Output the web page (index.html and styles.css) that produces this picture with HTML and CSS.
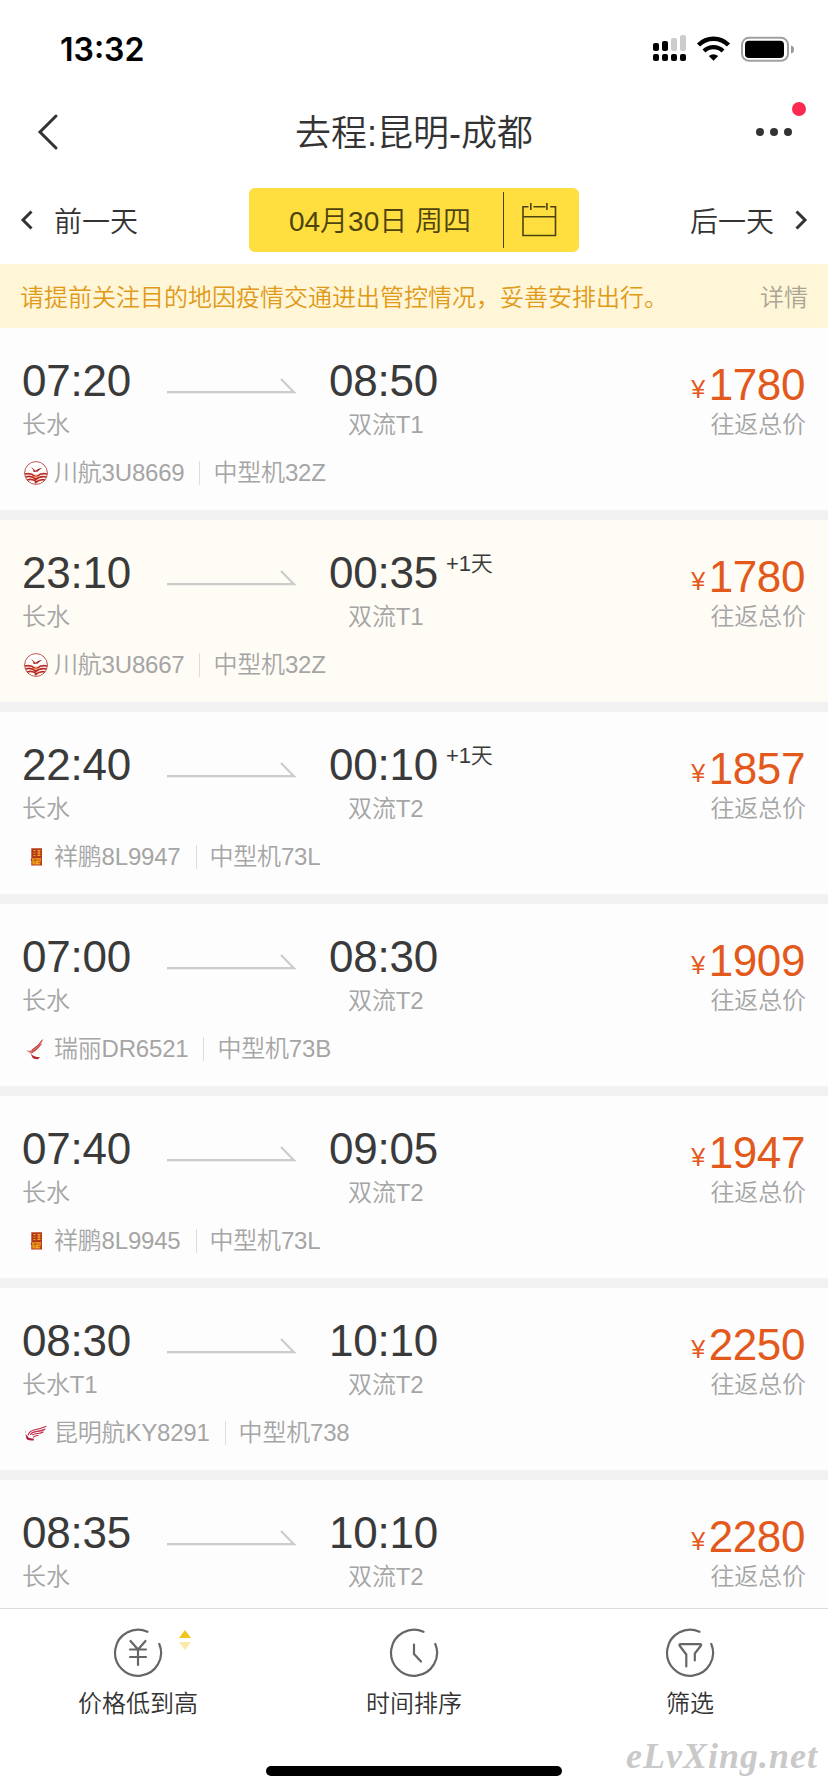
FILE: index.html
```
<!DOCTYPE html>
<html lang="zh-CN">
<head>
<meta charset="utf-8">
<title>去程:昆明-成都</title>
<link rel="stylesheet" href="styles.css">
</head>
<body>
<svg class="defs" width="0" height="0">
  <symbol id="arrow" viewBox="0 0 130 18"><path d="M1 15.2H128L115 2" fill="none" stroke="#ccc" stroke-width="2.2"/></symbol>
  <symbol id="sichuan" viewBox="0 0 24 24">
    <circle cx="12" cy="12" r="11.4" fill="#fff" stroke="#b8433c" stroke-width=".9"/>
    <path d="M5.5 5.5Q9 7 11.5 9.8Q14 7 18.6 6.7Q15.5 8 13.8 10.6L9.5 11Q10 8 5.5 5.5Z" fill="#a3201c"/>
    <g fill="none" stroke="#bb2a25" stroke-width="1.7">
      <path d="M.8 13Q7 11.5 11 15.3"/><path d="M1.6 16Q7 14 12 18.3"/><path d="M3 19Q8 17 13 21"/>
      <path d="M23.2 13Q17 11.5 13 15.3"/><path d="M22.4 16Q16 14.5 11 19"/><path d="M21 19Q16 17.5 11 22"/>
    </g>
    <path d="M10.5 15.5L12 13L13.5 15.5L12 17.5Z" fill="#e8863a"/>
  </symbol>
  <symbol id="lucky" viewBox="0 0 24 24">
    <path d="M7.3 3.3H18V20.5H7.3V16L6.4 14.8L7.3 13.7Z" fill="#b43a1d"/>
    <path d="M9.5 5.5H11.5M9.5 8H11.5M9.5 10.5H11.5M13.3 5.5H16.5M13.3 8H16.5M13.3 10.5H16.5M14.9 5V11" stroke="#f2a51e" stroke-width="1.2"/>
    <path d="M8 13.2H17L16 19.4H8.6Z" fill="#eda41b"/>
    <path d="M9 15.2H16M11 13.5V18.5M14 17.5H16" stroke="#c04a17" stroke-width=".8"/>
  </symbol>
  <symbol id="ruili" viewBox="0 0 24 24">
    <path d="M18.8 2.3Q17 11 7.2 16.8L2 13.3Q5 14.2 7.2 13.2Q14 9 18.8 2.3Z" fill="#d6706a"/>
    <path d="M18.6 2.6Q15 8.5 8 13M17.5 7Q14 12.5 8 15.5" fill="none" stroke="#c7322c" stroke-width=".9"/>
    <path d="M6.5 16Q8.5 20 16.2 20.3L13.8 22.2Q9.5 22.5 8.2 20.2Z" fill="#b52a27"/>
  </symbol>
  <symbol id="kunming" viewBox="0 0 24 24">
    <path d="M1 8.6Q.6 13 3 14.6L4.5 16.6Q6.5 17.7 9.5 17.5L10 19.2Q3.5 20 2.3 17.2Q1.6 14 1 8.6Z" fill="#b01f3b"/>
    <path d="M4.2 14.4Q4.6 10.5 10 9Q17 7.5 22.4 5.2M6.4 14Q7.2 11.5 12 10.7Q17 10 21.3 8.1M8.3 14.2Q9.5 12.8 14 12.5Q17.5 12.2 19.5 10.8M9.4 16.6Q9.8 14.8 14.5 14.5" fill="none" stroke="#bd2d49" stroke-width="1.2"/>
  </symbol>
  <symbol id="ring" viewBox="0 0 52 52"><path d="M35.5 4.8A23 23 0 1 0 47.3 17" fill="none" stroke="#666" stroke-width="2.2" stroke-linecap="round"/></symbol>
</svg>
<div class="screen">
  <header class="status">
    <span class="clock">13:32</span>
    <svg class="status-icons" width="144" height="30" viewBox="0 0 144 30">
      <g><rect x="1" y="9" width="6" height="8" rx="2"/><rect x="10" y="7" width="6" height="10" rx="2"/><rect x="19" y="4" width="6" height="13" rx="2" fill="#ccc"/><rect x="28" y="1" width="6" height="16" rx="2" fill="#ccc"/>
      <rect x="1" y="20" width="6" height="7" rx="2"/><rect x="10" y="20" width="6" height="7" rx="2"/><rect x="19" y="20" width="6" height="7" rx="2"/><rect x="28" y="20" width="6" height="7" rx="2"/></g>
      <path d="M46.5 11A21 21 0 0 1 76.5 11" fill="none" stroke="#000" stroke-width="4.4"/>
      <path d="M52 17A13.5 13.5 0 0 1 71 17" fill="none" stroke="#000" stroke-width="4.2"/>
      <path d="M56.8 22Q61.5 18.4 66.2 22L61.5 26.8Z"/>
      <rect x="90" y="3.8" width="46" height="23" rx="7" fill="#fff" stroke="#a0a0a0" stroke-width="2"/>
      <rect x="93" y="6.8" width="39" height="17.2" rx="4"/>
      <path d="M139 11.5Q142 12 142 15.4Q142 18.8 139 19.4Z" fill="#999"/>
    </svg>
  </header>
  <nav class="nav">
    <svg class="back" width="24" height="38" viewBox="0 0 24 38"><path d="M20 3L4 19L20 35" fill="none" stroke="#333" stroke-width="3" stroke-linecap="round"/></svg>
    <h1 class="title">去程:昆明-成都</h1>
    <div class="more"><i class="dot"></i><i class="dot"></i><i class="dot"></i><i class="badge"></i></div>
  </nav>
  <section class="days">
    <a class="day"><svg width="14" height="22" viewBox="0 0 14 22"><path d="M11.5 2.5L3 11L11.5 19.5" fill="none" stroke="#333" stroke-width="3"/></svg><span class="day-text">前一天</span></a>
    <div class="date">
      <span class="date-text">04月30日 周四</span>
      <span class="date-icon"><svg width="36" height="36" viewBox="0 0 36 36"><path d="M7.5 4.8H2V33.5H34.5V4.8H29.2M12.5 4.8H24.5M2 14.7H34.5M9.8 1V8M25.9 1V8" fill="none" stroke="#4d430f" stroke-width="1.6"/></svg></span>
    </div>
    <a class="day"><span class="day-text">后一天</span><svg width="14" height="22" viewBox="0 0 14 22"><path d="M2.5 2.5L11 11L2.5 19.5" fill="none" stroke="#333" stroke-width="3"/></svg></a>
  </section>
  <section class="notice"><span>请提前关注目的地因疫情交通进出管控情况，妥善安排出行。</span><a class="detail">详情</a></section>
  <main class="list">
    <article class="card">
      <div class="depart"><div class="time">07:20</div><div class="port">长水</div></div>
      <svg class="arrow"><use href="#arrow"/></svg>
      <div class="arrive"><div class="time">08:50</div><div class="port">双流T1</div></div>
      <div class="fare"><div class="price"><span class="yen">¥</span>1780</div><div class="port">往返总价</div></div>
      <div class="flight"><svg class="logo"><use href="#sichuan"/></svg><span class="code">川航3U8669</span><span class="plane">中型机32Z</span></div>
    </article>
    <article class="card visited">
      <div class="depart"><div class="time">23:10</div><div class="port">长水</div></div>
      <svg class="arrow"><use href="#arrow"/></svg>
      <div class="arrive"><div class="time">00:35<span class="plus">+1天</span></div><div class="port">双流T1</div></div>
      <div class="fare"><div class="price"><span class="yen">¥</span>1780</div><div class="port">往返总价</div></div>
      <div class="flight"><svg class="logo"><use href="#sichuan"/></svg><span class="code">川航3U8667</span><span class="plane">中型机32Z</span></div>
    </article>
    <article class="card">
      <div class="depart"><div class="time">22:40</div><div class="port">长水</div></div>
      <svg class="arrow"><use href="#arrow"/></svg>
      <div class="arrive"><div class="time">00:10<span class="plus">+1天</span></div><div class="port">双流T2</div></div>
      <div class="fare"><div class="price"><span class="yen">¥</span>1857</div><div class="port">往返总价</div></div>
      <div class="flight"><svg class="logo"><use href="#lucky"/></svg><span class="code">祥鹏8L9947</span><span class="plane">中型机73L</span></div>
    </article>
    <article class="card">
      <div class="depart"><div class="time">07:00</div><div class="port">长水</div></div>
      <svg class="arrow"><use href="#arrow"/></svg>
      <div class="arrive"><div class="time">08:30</div><div class="port">双流T2</div></div>
      <div class="fare"><div class="price"><span class="yen">¥</span>1909</div><div class="port">往返总价</div></div>
      <div class="flight"><svg class="logo"><use href="#ruili"/></svg><span class="code">瑞丽DR6521</span><span class="plane">中型机73B</span></div>
    </article>
    <article class="card">
      <div class="depart"><div class="time">07:40</div><div class="port">长水</div></div>
      <svg class="arrow"><use href="#arrow"/></svg>
      <div class="arrive"><div class="time">09:05</div><div class="port">双流T2</div></div>
      <div class="fare"><div class="price"><span class="yen">¥</span>1947</div><div class="port">往返总价</div></div>
      <div class="flight"><svg class="logo"><use href="#lucky"/></svg><span class="code">祥鹏8L9945</span><span class="plane">中型机73L</span></div>
    </article>
    <article class="card">
      <div class="depart"><div class="time">08:30</div><div class="port">长水T1</div></div>
      <svg class="arrow"><use href="#arrow"/></svg>
      <div class="arrive"><div class="time">10:10</div><div class="port">双流T2</div></div>
      <div class="fare"><div class="price"><span class="yen">¥</span>2250</div><div class="port">往返总价</div></div>
      <div class="flight"><svg class="logo"><use href="#kunming"/></svg><span class="code">昆明航KY8291</span><span class="plane">中型机738</span></div>
    </article>
    <article class="card">
      <div class="depart"><div class="time">08:35</div><div class="port">长水</div></div>
      <svg class="arrow"><use href="#arrow"/></svg>
      <div class="arrive"><div class="time">10:10</div><div class="port">双流T2</div></div>
      <div class="fare"><div class="price"><span class="yen">¥</span>2280</div><div class="port">往返总价</div></div>
    </article>
  </main>
  <footer class="tabs">
    <div class="tab">
      <svg width="52" height="52" viewBox="0 0 52 52"><use href="#ring"/><path d="M18.5 14L26 22.5L33.5 14M26 22.5V38M18 22.5H34M18 30H34" fill="none" stroke="#666" stroke-width="2.2" stroke-linecap="round"/></svg>
      <span>价格低到高</span>
      <svg class="sort" width="14" height="22" viewBox="0 0 14 22"><path d="M1 9L7 1L13 9Z" fill="#f0c61c"/><path d="M1 13H13L7 21Z" fill="#fbe9a7"/></svg>
    </div>
    <div class="tab">
      <svg width="52" height="52" viewBox="0 0 52 52"><use href="#ring"/><path d="M26 17.5V27L33 34.5" fill="none" stroke="#666" stroke-width="2.2" stroke-linecap="round"/></svg>
      <span>时间排序</span>
    </div>
    <div class="tab">
      <svg width="52" height="52" viewBox="0 0 52 52"><use href="#ring"/><path d="M22.3 39.5V27.5L15.5 18.5Q15.2 17.2 16.5 17.2H36Q37.5 17.2 37 18.5L30.8 26.5V33.5" fill="none" stroke="#666" stroke-width="2.2" stroke-linecap="round" stroke-linejoin="round"/></svg>
      <span>筛选</span>
    </div>
    <div class="home"></div>
    <div class="watermark">eLvXing.net</div>
  </footer>
</div>
</body>
</html>
```
FILE: styles.css
```
* { box-sizing: border-box; }
body {
  margin: 0;
  background: #fff;
  color: #333;
  font-family: "Liberation Sans", "Noto Sans CJK SC", sans-serif;
  font-weight: 350;
}
.defs { position: absolute; }
.screen {
  width: 828px;
  height: 1792px;
  overflow: hidden;
  display: flex;
  flex-direction: column;
}
.status {
  height: 88px;
  flex: none;
  display: flex;
  justify-content: space-between;
  padding: 34px 32px 0 60px;
}
.clock {
  font: 600 32px/32px Inter, sans-serif;
  color: #000;
}
.nav {
  height: 88px;
  flex: none;
  display: grid;
  grid-template-columns: 120px 1fr 120px;
  align-items: center;
}
.back { margin-left: 36px; }
.title {
  margin: 0;
  padding-top: 3px;
  text-align: center;
  font-size: 36px;
  font-weight: 350;
  line-height: 44px;
}
.more {
  position: relative;
  display: flex;
  gap: 6px;
  padding-left: 48px;
}
.dot {
  width: 8px;
  height: 8px;
  border-radius: 50%;
  background: #333;
}
.badge {
  position: absolute;
  left: 84px;
  top: -26px;
  width: 14px;
  height: 14px;
  border-radius: 50%;
  background: #fa2a50;
}
.days {
  height: 88px;
  flex: none;
  display: flex;
  justify-content: space-between;
  align-items: center;
  padding: 0 20px;
}
.day {
  display: flex;
  align-items: center;
  gap: 20px;
  width: 229px;
  font-size: 28px;
  line-height: 36px;
}
.day-text { padding-top: 6px; }
.day:last-child { justify-content: flex-end; }
.date {
  width: 330px;
  height: 64px;
  display: flex;
  align-items: center;
  border-radius: 6px;
  background: #ffde40;
  color: #4d430f;
}
.date-text {
  width: 254px;
  padding: 4px 0 0 8px;
  text-align: center;
  font-size: 28px;
  line-height: 36px;
}
.date-icon {
  flex: 1;
  height: 56px;
  display: flex;
  align-items: center;
  padding-left: 17px;
  border-left: 1px solid #4d430f;
}
.notice {
  height: 64px;
  flex: none;
  display: flex;
  justify-content: space-between;
  align-items: center;
  padding: 4px 20px 0;
  background: #fff5d7;
  color: #df9a18;
  font-size: 24px;
  line-height: 32px;
}
.detail { color: #aaa594; }
.list {
  flex: 1;
  min-height: 0;
  overflow: hidden;
  display: flex;
  flex-direction: column;
  gap: 10px;
  background: #f2f2f2;
}
.card {
  height: 182px;
  flex: none;
  display: grid;
  grid-template-columns: 144px 162px 1fr 160px;
  grid-template-rows: 82px 32px;
  row-gap: 16px;
  padding: 31px 22px 0;
  background: #fdfdfd;
}
.visited { background: #fffcf5; }
.time {
  font-size: 44px;
  line-height: 44px;
  letter-spacing: -0.2px;
  white-space: nowrap;
  color: #3a3a3a;
}
.port {
  margin-top: 6px;
  font-size: 24px;
  line-height: 32px;
  letter-spacing: -0.1px;
  color: #a5a5a5;
}
.arrow {
  width: 130px;
  height: 18px;
  margin-top: 18px;
}
.arrive { padding-left: 1px; }
.arrive .port { padding-left: 19px; }
.plus {
  display: inline-block;
  height: 22px;
  margin-left: 8px;
  font-size: 22px;
  line-height: 22px;
  vertical-align: 17px;
}
.fare {
  padding-top: 4px;
  text-align: right;
}
.price {
  height: 44px;
  padding-right: 1px;
  font-size: 44px;
  line-height: 44px;
  letter-spacing: -0.4px;
  color: #e2591b;
}
.fare .port { margin-top: 2px; }
.yen {
  margin-right: 4px;
  font-size: 25px;
  line-height: 25px;
  vertical-align: 2px;
}
.flight {
  grid-column: 1 / -1;
  display: flex;
  align-items: center;
  font-size: 24px;
  line-height: 32px;
  letter-spacing: -0.2px;
  color: #a5a5a5;
}
.logo {
  width: 24px;
  height: 24px;
  margin: 0 6px 0 2px;
}
.code { padding-right: 15px; }
.plane {
  position: relative;
  padding-left: 14px;
}
.plane::before {
  content: "";
  position: absolute;
  left: 0;
  top: 4px;
  height: 24px;
  border-left: 1px solid #ddd;
}
.tabs {
  position: relative;
  height: 184px;
  flex: none;
  display: flex;
  border-top: 1px solid #dcdcdc;
  background: #fff;
}
.tab {
  position: relative;
  flex: 1;
  display: flex;
  flex-direction: column;
  align-items: center;
  gap: 9px;
  padding-top: 18px;
  font-size: 24px;
  line-height: 32px;
}
.sort {
  position: absolute;
  left: 178px;
  top: 20px;
}
.home {
  position: absolute;
  left: 266px;
  top: 157px;
  width: 296px;
  height: 10px;
  border-radius: 5px;
  background: #000;
}
.watermark {
  position: absolute;
  right: 10px;
  top: 127px;
  font: italic 700 36px/40px "Liberation Serif", serif;
  letter-spacing: 1px;
  color: #c9c9c9;
}
```
